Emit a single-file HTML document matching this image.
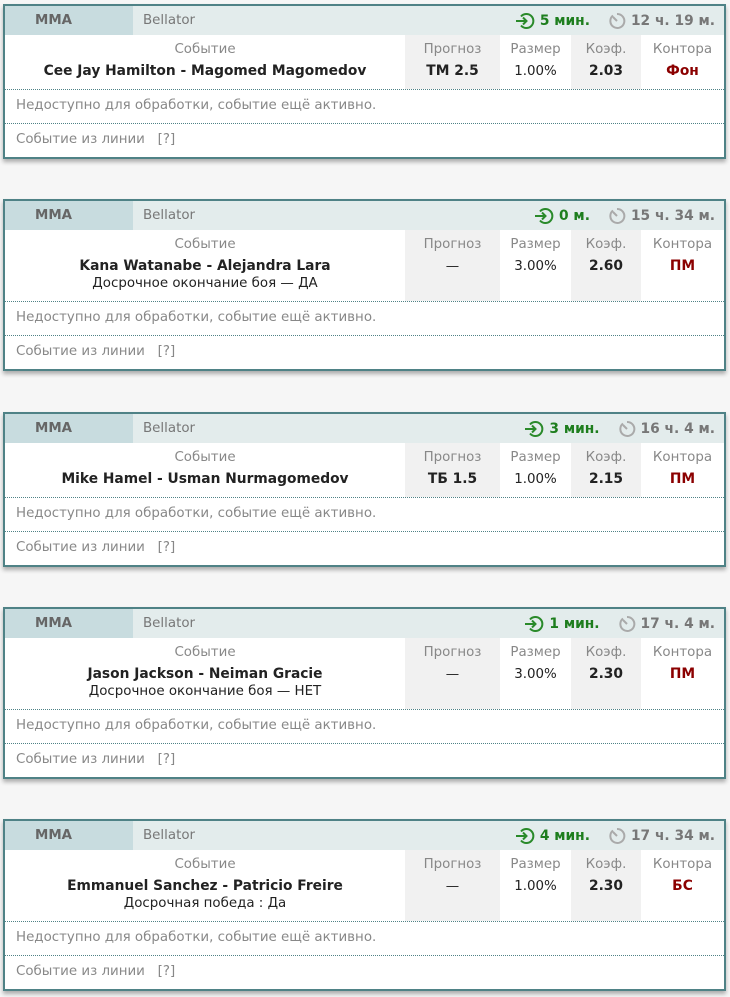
<!DOCTYPE html>
<html><head><meta charset="utf-8"><style>
body{margin:0;background:#f6f6f6;font-family:"DejaVu Sans","Liberation Sans",sans-serif;font-size:13.4px;width:730px;height:997px;overflow:hidden;position:relative}
.card{position:absolute;left:3px;width:719px;border:2px solid #4f8286;background:#fff;box-shadow:0 3px 4px rgba(0,0,0,.3)}
.hd{height:29px;background:#e3ecec;display:flex;align-items:center;position:relative}
.mma{width:128px;height:29px;background:#c8dcdf;color:#666;font-weight:bold;line-height:29px;padding-left:30px;box-sizing:border-box}
.bel{color:#777;margin-left:10px}
.rt{position:absolute;right:9px;top:0;height:29px;display:flex;align-items:center;font-weight:bold;font-size:13.8px}
.g{color:#1e7e1e;margin-left:5px;margin-right:18px}
.t{color:#777;margin-left:5px}
.main{display:flex}
.c{text-align:center;padding-top:6px;line-height:17px;box-sizing:border-box}
.lb{color:#888;margin-bottom:5px}
.v{font-weight:bold;color:#222;font-size:13.8px}
.gr{background:#f1f1f1}
.row{border-top:1px dotted #4f8286;height:34px;line-height:32px;padding-left:11px;color:#888;box-sizing:border-box}
.red{color:#8b0000;font-weight:bold;font-size:13.8px}
.sub{color:#222;font-weight:normal}
</style></head><body>

<div class="card" style="top:4px">
<div class="hd"><div class="mma">MMA</div><div class="bel">Bellator</div>
<div class="rt"><svg width="20" height="18" viewBox="0 0 20 18"><path d="M6 4.5A7 7 0 1 1 6 13.5" fill="none" stroke="#2a8a2a" stroke-width="2"/><path d="M1 9h10M8 5.5l3.5 3.5-3.5 3.5" fill="none" stroke="#2a8a2a" stroke-width="2"/></svg><span class="g">5 мин.</span><svg width="18" height="18" viewBox="0 0 18 18"><path d="M5 3.5A7 7 0 1 0 9 2" fill="none" stroke="#aaa" stroke-width="2"/><path d="M5 5l4 4" stroke="#aaa" stroke-width="2"/></svg><span class="t">12 ч. 19 м.</span></div></div>
<div class="main" style="height:54px">
<div class="c" style="width:400px"><div class="lb">Событие</div><div class="v">Cee Jay Hamilton - Magomed Magomedov</div></div>
<div class="c gr" style="width:95px"><div class="lb">Прогноз</div><div class="v">ТМ 2.5</div></div>
<div class="c" style="width:71px"><div class="lb">Размер</div><div class="sub">1.00%</div></div>
<div class="c gr" style="width:70px"><div class="lb">Коэф.</div><div class="v">2.03</div></div>
<div class="c" style="width:83px"><div class="lb">Контора</div><div class="red">Фон</div></div>
</div>
<div class="row">Недоступно для обработки, событие ещё активно.</div>
<div class="row">Событие из линии &nbsp;&nbsp;[?]</div>
</div>

<div class="card" style="top:199px">
<div class="hd"><div class="mma">MMA</div><div class="bel">Bellator</div>
<div class="rt"><svg width="20" height="18" viewBox="0 0 20 18"><path d="M6 4.5A7 7 0 1 1 6 13.5" fill="none" stroke="#2a8a2a" stroke-width="2"/><path d="M1 9h10M8 5.5l3.5 3.5-3.5 3.5" fill="none" stroke="#2a8a2a" stroke-width="2"/></svg><span class="g">0 м.</span><svg width="18" height="18" viewBox="0 0 18 18"><path d="M5 3.5A7 7 0 1 0 9 2" fill="none" stroke="#aaa" stroke-width="2"/><path d="M5 5l4 4" stroke="#aaa" stroke-width="2"/></svg><span class="t">15 ч. 34 м.</span></div></div>
<div class="main" style="height:71px">
<div class="c" style="width:400px"><div class="lb">Событие</div><div class="v">Kana Watanabe - Alejandra Lara</div><div class="sub">Досрочное окончание боя — ДА</div></div>
<div class="c gr" style="width:95px"><div class="lb">Прогноз</div><div class="sub">—</div></div>
<div class="c" style="width:71px"><div class="lb">Размер</div><div class="sub">3.00%</div></div>
<div class="c gr" style="width:70px"><div class="lb">Коэф.</div><div class="v">2.60</div></div>
<div class="c" style="width:83px"><div class="lb">Контора</div><div class="red">ПМ</div></div>
</div>
<div class="row">Недоступно для обработки, событие ещё активно.</div>
<div class="row">Событие из линии &nbsp;&nbsp;[?]</div>
</div>

<div class="card" style="top:412px">
<div class="hd"><div class="mma">MMA</div><div class="bel">Bellator</div>
<div class="rt"><svg width="20" height="18" viewBox="0 0 20 18"><path d="M6 4.5A7 7 0 1 1 6 13.5" fill="none" stroke="#2a8a2a" stroke-width="2"/><path d="M1 9h10M8 5.5l3.5 3.5-3.5 3.5" fill="none" stroke="#2a8a2a" stroke-width="2"/></svg><span class="g">3 мин.</span><svg width="18" height="18" viewBox="0 0 18 18"><path d="M5 3.5A7 7 0 1 0 9 2" fill="none" stroke="#aaa" stroke-width="2"/><path d="M5 5l4 4" stroke="#aaa" stroke-width="2"/></svg><span class="t">16 ч. 4 м.</span></div></div>
<div class="main" style="height:54px">
<div class="c" style="width:400px"><div class="lb">Событие</div><div class="v">Mike Hamel - Usman Nurmagomedov</div></div>
<div class="c gr" style="width:95px"><div class="lb">Прогноз</div><div class="v">ТБ 1.5</div></div>
<div class="c" style="width:71px"><div class="lb">Размер</div><div class="sub">1.00%</div></div>
<div class="c gr" style="width:70px"><div class="lb">Коэф.</div><div class="v">2.15</div></div>
<div class="c" style="width:83px"><div class="lb">Контора</div><div class="red">ПМ</div></div>
</div>
<div class="row">Недоступно для обработки, событие ещё активно.</div>
<div class="row">Событие из линии &nbsp;&nbsp;[?]</div>
</div>

<div class="card" style="top:607px">
<div class="hd"><div class="mma">MMA</div><div class="bel">Bellator</div>
<div class="rt"><svg width="20" height="18" viewBox="0 0 20 18"><path d="M6 4.5A7 7 0 1 1 6 13.5" fill="none" stroke="#2a8a2a" stroke-width="2"/><path d="M1 9h10M8 5.5l3.5 3.5-3.5 3.5" fill="none" stroke="#2a8a2a" stroke-width="2"/></svg><span class="g">1 мин.</span><svg width="18" height="18" viewBox="0 0 18 18"><path d="M5 3.5A7 7 0 1 0 9 2" fill="none" stroke="#aaa" stroke-width="2"/><path d="M5 5l4 4" stroke="#aaa" stroke-width="2"/></svg><span class="t">17 ч. 4 м.</span></div></div>
<div class="main" style="height:71px">
<div class="c" style="width:400px"><div class="lb">Событие</div><div class="v">Jason Jackson - Neiman Gracie</div><div class="sub">Досрочное окончание боя — НЕТ</div></div>
<div class="c gr" style="width:95px"><div class="lb">Прогноз</div><div class="sub">—</div></div>
<div class="c" style="width:71px"><div class="lb">Размер</div><div class="sub">3.00%</div></div>
<div class="c gr" style="width:70px"><div class="lb">Коэф.</div><div class="v">2.30</div></div>
<div class="c" style="width:83px"><div class="lb">Контора</div><div class="red">ПМ</div></div>
</div>
<div class="row">Недоступно для обработки, событие ещё активно.</div>
<div class="row">Событие из линии &nbsp;&nbsp;[?]</div>
</div>

<div class="card" style="top:819px">
<div class="hd"><div class="mma">MMA</div><div class="bel">Bellator</div>
<div class="rt"><svg width="20" height="18" viewBox="0 0 20 18"><path d="M6 4.5A7 7 0 1 1 6 13.5" fill="none" stroke="#2a8a2a" stroke-width="2"/><path d="M1 9h10M8 5.5l3.5 3.5-3.5 3.5" fill="none" stroke="#2a8a2a" stroke-width="2"/></svg><span class="g">4 мин.</span><svg width="18" height="18" viewBox="0 0 18 18"><path d="M5 3.5A7 7 0 1 0 9 2" fill="none" stroke="#aaa" stroke-width="2"/><path d="M5 5l4 4" stroke="#aaa" stroke-width="2"/></svg><span class="t">17 ч. 34 м.</span></div></div>
<div class="main" style="height:71px">
<div class="c" style="width:400px"><div class="lb">Событие</div><div class="v">Emmanuel Sanchez - Patricio Freire</div><div class="sub">Досрочная победа : Да</div></div>
<div class="c gr" style="width:95px"><div class="lb">Прогноз</div><div class="sub">—</div></div>
<div class="c" style="width:71px"><div class="lb">Размер</div><div class="sub">1.00%</div></div>
<div class="c gr" style="width:70px"><div class="lb">Коэф.</div><div class="v">2.30</div></div>
<div class="c" style="width:83px"><div class="lb">Контора</div><div class="red">БС</div></div>
</div>
<div class="row">Недоступно для обработки, событие ещё активно.</div>
<div class="row">Событие из линии &nbsp;&nbsp;[?]</div>
</div>

</body></html>
